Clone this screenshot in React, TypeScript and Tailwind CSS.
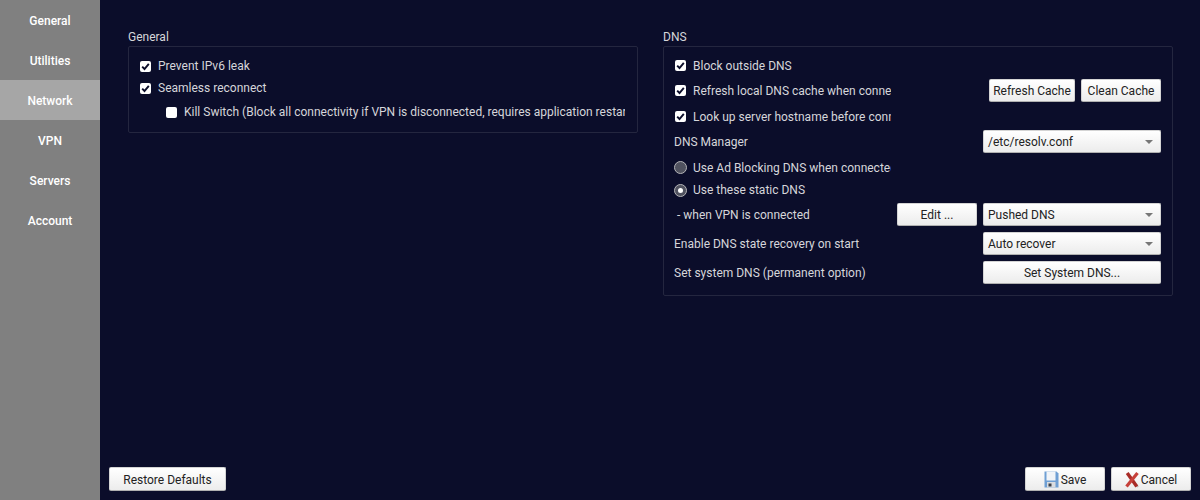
import React from 'react';

const navItems = ['General', 'Utilities', 'Network', 'VPN', 'Servers', 'Account'];

const Check = ({ checked = true }: { checked?: boolean }) => (
  <span className="flex h-[11px] w-[11px] shrink-0 items-center justify-center rounded-[2px] bg-white">
    {checked && (
      <svg width="9" height="9" viewBox="0 0 9 9" fill="none">
        <path d="M1.2 4.6 L3.5 7 L7.8 1.8" stroke="#0b0d2a" strokeWidth="1.9" />
      </svg>
    )}
  </span>
);

const Radio = ({ checked = false }: { checked?: boolean }) => (
  <span className="flex h-[13px] w-[13px] shrink-0 items-center justify-center rounded-full border border-[#b5b5b8] bg-[#50525f]">
    {checked && <span className="h-[5px] w-[5px] rounded-full bg-white" />}
  </span>
);

const Button = ({ className, children }: { className: string; children: React.ReactNode }) => (
  <button className={`flex shrink-0 items-center justify-center rounded-[2px] border border-[#d4d4d4] border-b-[#b0b0b0] bg-gradient-to-b from-white to-[#ececec] text-[12px] text-[#222] ${className}`}>
    {children}
  </button>
);

const Combo = ({ label }: { label: string }) => (
  <div className="flex h-[23px] w-[178px] shrink-0 items-center justify-between rounded-[2px] border border-[#d4d4d4] border-b-[#b0b0b0] bg-gradient-to-b from-white to-[#ececec] pl-[4px] pr-[7px] pt-[1px] text-[12px] text-[#222]">
    <span>{label}</span>
    <span className="h-0 w-0 border-x-[4px] border-t-[4px] border-x-transparent border-t-[#777]" />
  </div>
);

const Clipped = ({ children }: { children: React.ReactNode }) => (
  <span className="block overflow-hidden whitespace-nowrap">{children}</span>
);

export default function App() {
  return (
    <div className="flex h-[500px] w-[1200px] overflow-hidden bg-[#0b0d2a] font-['Roboto',sans-serif] text-[12px] text-[#d6d6da]">
      <nav className="w-[100px] shrink-0 bg-[#808080]">
        {navItems.map((item) => (
          <div
            key={item}
            className={`flex h-[40px] items-center justify-center pt-[1px] font-medium text-white ${item === 'Network' ? 'bg-[#a6a6a6]' : ''}`}
          >
            {item}
          </div>
        ))}
      </nav>

      <main className="flex flex-1 flex-col pb-[9px] pl-[9px] pr-[9px]">
        <div className="grid flex-1 grid-cols-[510px_510px] gap-x-[25px] pl-[19px] pt-[29px]">
          <section>
            <h2 className="mb-[2px] h-[15px] pt-[1px] font-normal leading-[15px]">General</h2>
            <div className="h-[87px] rounded-[2px] border border-[#24263f] pl-[11px] pt-[7px]">
              <div className="flex h-[24px] items-center gap-[7px]">
                <Check />
                <span>Prevent IPv6 leak</span>
              </div>
              <div className="flex h-[20px] items-center gap-[7px]">
                <Check />
                <span>Seamless reconnect</span>
              </div>
              <div className="mt-[2px] flex h-[24px] items-center gap-[7px] pl-[26px] pr-[12px]">
                <Check checked={false} />
                <Clipped>Kill Switch (Block all connectivity if VPN is disconnected, requires application restart)</Clipped>
              </div>
            </div>
          </section>

          <section>
            <h2 className="mb-[2px] h-[15px] pt-[1px] font-normal leading-[15px]">DNS</h2>
            <div className="h-[250px] rounded-[2px] border border-[#24263f] pl-[10px] pr-[11px] pt-[6px]">
              <div className="flex h-[24px] items-center gap-[7px] pl-[1px] pt-[1px]">
                <Check />
                <span>Block outside DNS</span>
              </div>
              <div className="flex h-[25px] items-center pt-[2px]">
                <div className="flex w-[217px] items-center gap-[7px] pl-[1px]">
                  <Check />
                  <Clipped>Refresh local DNS cache when connecting</Clipped>
                </div>
                <div className="ml-auto flex gap-[6px]">
                  <Button className="h-[23px] w-[86px] pt-[1px]">Refresh Cache</Button>
                  <Button className="h-[23px] w-[80px] pt-[1px]">Clean Cache</Button>
                </div>
              </div>
              <div className="flex h-[28px] items-center gap-[7px] pl-[1px] pt-[1px]">
                <div className="flex w-[216px] items-center gap-[7px]">
                  <Check />
                  <Clipped>Look up server hostname before connecting</Clipped>
                </div>
              </div>
              <div className="flex h-[25px] items-center justify-between pb-[2px]">
                <span>DNS Manager</span>
                <Combo label="/etc/resolv.conf" />
              </div>
              <div className="flex h-[25px] w-[217px] items-center gap-[6px]">
                <Radio />
                <Clipped>Use Ad Blocking DNS when connected</Clipped>
              </div>
              <div className="flex h-[20px] items-center gap-[6px]">
                <Radio checked />
                <span>Use these static DNS</span>
              </div>
              <div className="mt-[1px] flex h-[27px] items-center">
                <span className="pl-[3px]">- when VPN is connected</span>
                <Button className="ml-auto mr-[6px] h-[23px] w-[80px] pt-[1px]">Edit ...</Button>
                <Combo label="Pushed DNS" />
              </div>
              <div className="mt-[1px] flex h-[29px] items-center justify-between">
                <span>Enable DNS state recovery on start</span>
                <Combo label="Auto recover" />
              </div>
              <div className="flex h-[29px] items-center justify-between">
                <span>Set system DNS (permanent option)</span>
                <Button className="h-[23px] w-[178px] pt-[1px]">Set System DNS...</Button>
              </div>
            </div>
          </section>
        </div>

        <footer className="flex items-center justify-between">
          <Button className="h-[24px] w-[117px] pt-[2px]">Restore Defaults</Button>
          <div className="flex gap-[6px]">
            <Button className="h-[24px] w-[80px] gap-[2px] pt-[1px]">
              <svg width="15" height="17" viewBox="0 0 15 17">
                <path d="M0.5 0.5h12l2 2v14h-14z" fill="#6f9fd4" />
                <path d="M2.5 0.5h9v9h-9z" fill="#f1f4f8" />
                <path d="M3 11h8.5v5.5H3z" fill="#d9dce0" />
                <path d="M4.5 12.5h3v3h-3z" fill="#3b3f46" />
              </svg>
              <span className="pt-[1px]">Save</span>
            </Button>
            <Button className="h-[24px] w-[80px] gap-[2px] pt-[1px]">
              <svg width="14" height="16" viewBox="0 0 14 16" fill="none">
                <path d="M3 2 L13 15" stroke="#9a9a9a" strokeWidth="2" opacity="0.6" />
                <path d="M2.2 1 L11.8 14.5" stroke="#a92c28" strokeWidth="3.4" />
                <path d="M12.5 1 L1.5 14.5" stroke="#c6403a" strokeWidth="3.2" />
              </svg>
              <span className="pt-[1px]">Cancel</span>
            </Button>
          </div>
        </footer>
      </main>
    </div>
  );
}
